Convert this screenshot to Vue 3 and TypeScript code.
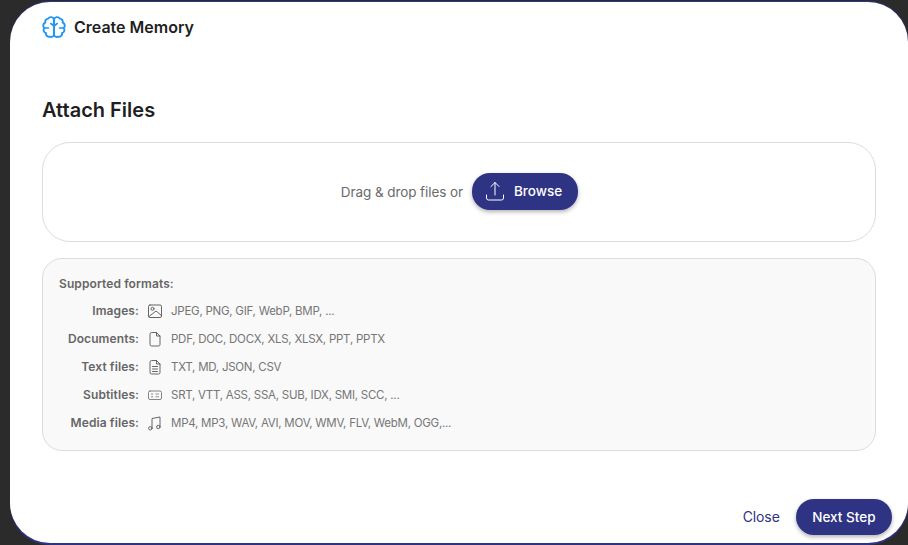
<script setup lang="ts">
interface FormatRow {
  label: string
  icon: string
  text: string
}

const formats: FormatRow[] = [
  { label: 'Images:', icon: 'image', text: 'JPEG, PNG, GIF, WebP, BMP, ...' },
  { label: 'Documents:', icon: 'doc', text: 'PDF, DOC, DOCX, XLS, XLSX, PPT, PPTX' },
  { label: 'Text files:', icon: 'text', text: 'TXT, MD, JSON, CSV' },
  { label: 'Subtitles:', icon: 'subs', text: 'SRT, VTT, ASS, SSA, SUB, IDX, SMI, SCC, ...' },
  { label: 'Media files:', icon: 'music', text: 'MP4, MP3, WAV, AVI, MOV, WMV, FLV, WebM, OGG,...' }
]
</script>

<template>
  <div class="page">
    <div class="modal">
      <header class="head">
        <svg class="brain" width="24" height="24" viewBox="0 0 24 24" fill="none" stroke="#2196f3" stroke-width="1.9" stroke-linecap="round" stroke-linejoin="round">
          <path d="M12 4.5A3.2 3.2 0 0 0 6.200 3.600A3 3 0 0 0 3.400 7.500A3.200 3.200 0 0 0 2.400 13A3.200 3.200 0 0 0 4 18.200A3 3 0 0 0 8 21.600A2.800 2.800 0 0 0 12 20Z" />
          <path d="M12 4.500A3.200 3.200 0 0 1 17.800 3.600A3 3 0 0 1 20.600 7.500A3.200 3.200 0 0 1 21.600 13A3.200 3.200 0 0 1 20 18.200A3 3 0 0 1 16 21.600A2.800 2.800 0 0 1 12 20Z" />
          <path d="M12 11 8.800 8.500M12 11l3.200-2.500M3 13h3.500M21 13h-3.500" stroke-width="1.6" />
        </svg>
        <span class="head-title">Create Memory</span>
      </header>

      <main class="body">
        <h2 class="section-title">Attach Files</h2>

        <div class="drop">
          <span class="drop-text">Drag &amp; drop files or</span>
          <button class="btn browse">
            <svg width="20" height="20" viewBox="0 0 20 20" fill="none" stroke="#fff" stroke-width="1" stroke-linecap="round" stroke-linejoin="round">
              <path d="M10 14V1.500M6 5.500 10 1.500l4 4" />
              <path d="M1.500 14v3a2 2 0 0 0 2 2h13a2 2 0 0 0 2-2v-3" />
            </svg>
            Browse
          </button>
        </div>

        <section class="formats">
          <div class="formats-title">Supported formats:</div>
          <div v-for="row in formats" :key="row.label" class="row">
            <span class="row-label">{{ row.label }}</span>
            <span class="row-icon">
              <svg width="16" height="16" viewBox="0 0 16 16" fill="none" stroke="#555" stroke-width="0.9" stroke-linecap="round" stroke-linejoin="round">
                <template v-if="row.icon === 'image'">
                  <rect x="1.500" y="2" width="13" height="12.500" rx="1.500" />
                  <circle cx="5.500" cy="5.800" r="1.500" />
                  <path d="M2 13.500 9 8l5.500 4.500" />
                </template>
                <template v-else-if="row.icon === 'doc'">
                  <path d="M3 3a1.500 1.500 0 0 1 1.500-1.500H9.500L13 5v8.500A1.500 1.500 0 0 1 11.500 15h-7A1.500 1.500 0 0 1 3 13.500z" />
                  <path d="M9.500 1.500V5H13" />
                </template>
                <template v-else-if="row.icon === 'text'">
                  <path d="M3 3a1.500 1.500 0 0 1 1.500-1.500H9.500L13 5v8.500A1.500 1.500 0 0 1 11.500 15h-7A1.500 1.500 0 0 1 3 13.500z" />
                  <path d="M9.500 1.500V5H13M5.500 7.500h5M5.500 10h5M5.500 12.500h5" />
                </template>
                <template v-else-if="row.icon === 'subs'">
                  <rect x="1.500" y="4" width="13" height="8.500" rx="1.500" stroke="#777" />
                  <path d="M4.500 7h2M9 7h2.500M4.500 9.800h2M9 9.800h2.500" stroke="#777" stroke-dasharray="1.200 1" />
                </template>
                <template v-else>
                  <path d="M5 13V3.500l8-1.500v9.500" />
                  <circle cx="3.300" cy="13.300" r="1.700" />
                  <circle cx="11.300" cy="12" r="1.700" />
                </template>
              </svg>
            </span>
            <span class="row-text">{{ row.text }}</span>
          </div>
        </section>
      </main>

      <footer class="foot">
        <button class="close">Close</button>
        <button class="btn next">Next Step</button>
      </footer>
    </div>
  </div>
</template>

<style>
html,
body {
  margin: 0;
  background: #2b2b2b;
  overflow: hidden;
}
</style>

<style scoped>
.page {
  width: 908px;
  height: 545px;
  box-sizing: border-box;
  padding: 2px 0 2px 10px;
  background: #2b2b2b;
  font-family: Inter, "Liberation Sans", sans-serif;
}

.modal {
  height: 100%;
  box-sizing: border-box;
  display: flex;
  flex-direction: column;
  background: #fff;
  border-radius: 40px;
  box-shadow: 0 -1px 0 #2f3383, 0 2px 0 #2f3383;
}

.head {
  display: flex;
  align-items: center;
  gap: 8px;
  height: 50px;
  padding-left: 32px;
}

.brain {
  flex: none;
}

.head-title {
  font-size: 16px;
  font-weight: 600;
  color: #1f1f23;
}

.body {
  flex: 1;
  padding: 46px 32px 0;
}

.section-title {
  margin: 0;
  font-size: 20px;
  line-height: 24px;
  font-weight: 600;
  color: #1f1f23;
}

.drop {
  height: 100px;
  margin-top: 20px;
  padding-left: 1px;
  box-sizing: border-box;
  border: 1px solid #dcdcdc;
  border-radius: 28px;
  display: flex;
  align-items: center;
  justify-content: center;
  gap: 9px;
}

.drop-text {
  font-size: 13.5px;
  letter-spacing: -0.08px;
  color: #6b6b6b;
}

.btn {
  border: none;
  background: #2f3383;
  color: #fff;
  font-family: inherit;
  font-weight: 500;
  font-size: 13.5px;
  border-radius: 18px;
  box-shadow: 0 2px 4px rgba(0, 0, 0, 0.3);
  display: flex;
  align-items: center;
}

.browse {
  height: 37px;
  margin-bottom: 2px;
  padding: 0 16px 0 13px;
  gap: 9px;
}

.formats {
  margin-top: 16px;
  height: 193px;
  box-sizing: border-box;
  padding: 17px 16px 0;
  background: #f9f9f9;
  border: 1px solid #dcdcdc;
  border-radius: 20px;
  font-size: 12px;
}

.formats-title {
  font-weight: 600;
  letter-spacing: 0.1px;
  color: #666;
  line-height: 15px;
  margin-bottom: 5.5px;
}

.row {
  display: flex;
  align-items: center;
  height: 28px;
}

.row-label {
  width: 80px;
  text-align: right;
  font-weight: 600;
  letter-spacing: 0.1px;
  color: #666;
}

.row-icon {
  width: 16px;
  height: 16px;
  margin-left: 8px;
  display: flex;
}

.row-text {
  margin-left: 8px;
  font-size: 11.5px;
  letter-spacing: -0.25px;
  color: #767676;
}

.foot {
  display: flex;
  justify-content: flex-end;
  align-items: flex-end;
  height: 62px;
  padding-right: 16px;
  padding-bottom: 8px;
  box-sizing: border-box;
  gap: 16px;
}

.close {
  border: none;
  background: none;
  font-family: inherit;
  font-size: 14px;
  letter-spacing: -0.1px;
  line-height: 36px;
  color: #2f3383;
  padding: 0;
}

.next {
  height: 36px;
  padding: 0 16.5px;
}
</style>
